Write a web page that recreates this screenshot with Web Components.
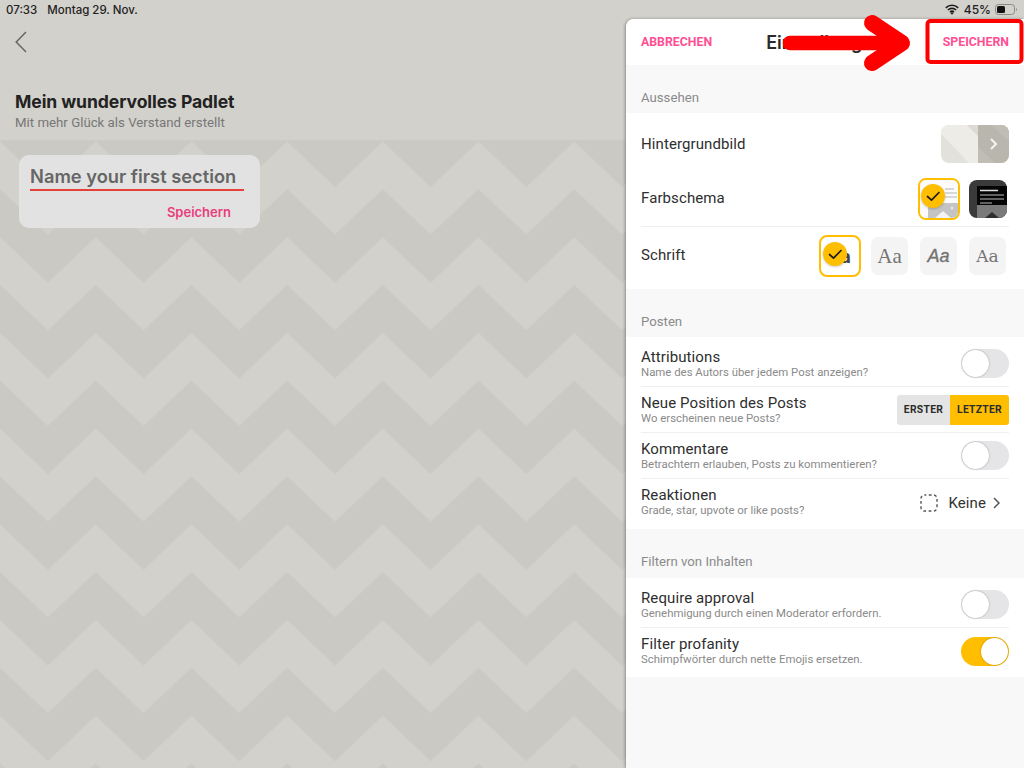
<!DOCTYPE html>
<html lang="de">
<head>
<meta charset="utf-8">
<title>Padlet Einstellungen</title>
<style>
  html, body { margin: 0; height: 100%; overflow: hidden; background: #d2d0cb; }
  body { font-family: Roboto, sans-serif; }
</style>
</head>
<body>
<padlet-app>
  <status-bar slot="status"></status-bar>
  <padlet-header slot="header" heading="Mein wundervolles Padlet" sub="Mit mehr Glück als Verstand erstellt"></padlet-header>
  <chevron-board slot="board">
    <section-card placeholder="Name your first section" action="Speichern"></section-card>
  </chevron-board>
  <settings-panel slot="panel">
    <settings-section label="Aussehen" pad-bottom="6">
      <settings-row heading="Hintergrundbild" height="54" plain>
        <wallpaper-thumb></wallpaper-thumb>
      </settings-row>
      <settings-row heading="Farbschema" height="56">
        <div style="display:flex;gap:9px;align-items:center;margin-right:2px">
          <scheme-thumb selected></scheme-thumb>
          <scheme-thumb dark></scheme-thumb>
        </div>
      </settings-row>
      <settings-row heading="Schrift" height="56" plain>
        <div style="display:flex;gap:12px;align-items:center;margin:2px 3px 0 0">
          <font-swatch selected face="'DejaVu Sans Mono',monospace" size="18" style="margin-right:-2px"></font-swatch>
          <font-swatch face="'Liberation Serif',serif" size="21"></font-swatch>
          <font-swatch face="'Liberation Sans',sans-serif" size="18" tilt></font-swatch>
          <font-swatch face="'DejaVu Serif',serif" size="17"></font-swatch>
        </div>
      </settings-row>
    </settings-section>
    <settings-section label="Posten">
      <settings-row heading="Attributions" sub="Name des Autors über jedem Post anzeigen?"><toggle-switch></toggle-switch></settings-row>
      <settings-row heading="Neue Position des Posts" sub="Wo erscheinen neue Posts?"><segment-switch first="ERSTER" second="LETZTER"></segment-switch></settings-row>
      <settings-row heading="Kommentare" sub="Betrachtern erlauben, Posts zu kommentieren?"><toggle-switch></toggle-switch></settings-row>
      <settings-row heading="Reaktionen" sub="Grade, star, upvote or like posts?" plain><reaction-picker value="Keine"></reaction-picker></settings-row>
    </settings-section>
    <settings-section label="Filtern von Inhalten" label-bottom="8" pad-bottom="3">
      <settings-row heading="Require approval" sub="Genehmigung durch einen Moderator erfordern."><toggle-switch></toggle-switch></settings-row>
      <settings-row heading="Filter profanity" sub="Schimpfwörter durch nette Emojis ersetzen." plain><toggle-switch on></toggle-switch></settings-row>
    </settings-section>
  </settings-panel>
  <red-annotation slot="overlay"></red-annotation>
</padlet-app>

<script>
const CHECK_BADGE = `
  <svg class="check" width="26" height="26" viewBox="0 0 26 26">
    <circle cx="13" cy="13" r="12" fill="#ffbf00"/>
    <path d="M7.500 13.500l4 3.600 7.500-7.600" fill="none" stroke="#1d1d1d" stroke-width="1.700" stroke-linecap="round" stroke-linejoin="round"/>
  </svg>`;

class Base extends HTMLElement {
  connectedCallback() {
    if (!this.shadowRoot) {
      this.attachShadow({ mode: 'open' });
      this.render();
    }
  }
}

class PadletApp extends Base {
  render() {
    this.shadowRoot.innerHTML = `
      <style>
        :host { display: block; position: relative; width: 1024px; height: 768px; overflow: hidden; }
        .page { display: flex; flex-direction: column; height: 100%; }
        .top { background: #d2d1cc; border-bottom: 1px solid #cdcbc6; height: 140px; flex: none; }
        .board { flex: 1; min-height: 0; display: flex; }
        .board ::slotted(*) { flex: 1; }
        .panel { position: absolute; top: 19px; right: 0; bottom: 0; width: 398px; display: flex; }
      </style>
      <div class="page">
        <div class="top">
          <slot name="status"></slot>
          <slot name="header"></slot>
        </div>
        <div class="board"><slot name="board"></slot></div>
      </div>
      <div class="panel"><slot name="panel"></slot></div>
      <slot name="overlay"></slot>
    `;
  }
}

class StatusBar extends Base {
  render() {
    this.shadowRoot.innerHTML = `
      <style>
        :host { display: flex; justify-content: space-between; align-items: center; height: 19px;
                padding: 0 7px 0 6px; box-sizing: border-box; font: 500 11.500px Inter, sans-serif; color: #222; }
        .left { display: flex; gap: 10px; }
        .right { display: flex; align-items: center; gap: 4px; }
        .pct { font-size: 12px; }
      </style>
      <div class="left"><span>07:33</span><span>Montag 29. Nov.</span></div>
      <div class="right">
        <svg width="14" height="11" viewBox="0 0 14 11" style="margin-right:1px">
          <path d="M.8 3.800a9 9 0 0 1 12.400 0M2.900 6a6 6 0 0 1 8.200 0M5 8.100a3 3 0 0 1 4 0" fill="none" stroke="#1c1c1c" stroke-width="1.600"/>
          <path d="M7 10.800L5.400 9.100a2.300 2.300 0 0 1 3.200 0z" fill="#1c1c1c"/>
        </svg>
        <span class="pct">45%</span>
        <svg width="22" height="11" viewBox="0 0 22 11">
          <rect x=".5" y=".5" width="19" height="10" rx="3" fill="none" stroke="#8a8884"/>
          <rect x="2" y="2" width="8" height="7" rx="1.500" fill="#111"/>
          <path d="M21 4v3c.7-.3 1-.9 1-1.500S21.700 4.300 21 4z" fill="#8a8884"/>
        </svg>
      </div>
    `;
  }
}

class PadletHeader extends Base {
  render() {
    this.shadowRoot.innerHTML = `
      <style>
        :host { display: flex; flex-direction: column; padding: 12px 15px 0; }
        svg { display: block; margin-bottom: 38px; }
        h1 { margin: 0; font: 700 17.600px/22px Inter, sans-serif; color: #222; letter-spacing: -.1px; }
        p { margin: 2px 0 0; font: 400 13.250px/16px Roboto, sans-serif; color: #777; }
      </style>
      <svg width="12" height="22" viewBox="0 0 12 22">
        <path d="M11 1L1.200 11 11 21" fill="none" stroke="#666" stroke-width="1.500"/>
      </svg>
      <h1>${this.getAttribute('heading')}</h1>
      <p>${this.getAttribute('sub')}</p>
    `;
  }
}

class ChevronBoard extends Base {
  render() {
    this.shadowRoot.innerHTML = `
      <style>
        :host { display: block; position: relative; background: #cbc9c3; overflow: hidden; }
        svg { position: absolute; inset: 0; width: 100%; height: 100%; }
        .content { position: relative; padding: 14px 0 0 19px; }
      </style>
      <svg aria-hidden="true">
        <defs>
          <pattern id="zig" width="95.700" height="95.700" patternUnits="userSpaceOnUse">
            <path d="M0 .5L47.850 46 95.700 .5V48L47.850 93.500 0 48z" fill="#d3d1cc"/>
          </pattern>
        </defs>
        <rect width="100%" height="100%" fill="url(#zig)"/>
      </svg>
      <div class="content"><slot></slot></div>
    `;
  }
}

class SectionCard extends Base {
  render() {
    this.shadowRoot.innerHTML = `
      <style>
        :host { display: flex; flex-direction: column; width: 241px; height: 72.500px; box-sizing: border-box;
                padding: 9px 16px 0 11px; background: #e2e2e2; border-radius: 10px; }
        .name { font: 600 18.300px/25px Inter, sans-serif; color: #666; white-space: nowrap;
                border-bottom: 2px solid #e6403a; }
        .action { align-self: flex-end; margin: 13px 13px 0 0; font: 600 13px/16px Inter, sans-serif; color: #ea3d7c; }
      </style>
      <div class="name">${this.getAttribute('placeholder')}</div>
      <div class="action">${this.getAttribute('action')}</div>
    `;
  }
}

class SettingsPanel extends Base {
  render() {
    this.shadowRoot.innerHTML = `
      <style>
        :host { display: flex; flex-direction: column; flex: 1; background: #f8f8f8; border-radius: 8px 0 0 0;
                box-shadow: -1px 0 3px rgba(60,58,54,.45); overflow: hidden; }
        header { display: grid; grid-template-columns: 1fr auto 1fr; align-items: center; height: 46px; flex: none;
                 padding: 0 15px; background: #fff; }
        .btn { font: 700 12.300px Roboto, sans-serif; color: #ff4f93; }
        .btn.save { justify-self: end; }
        h2 { margin: 0; font: 600 18px Inter, sans-serif; color: #2a2a2a; }
      </style>
      <header>
        <span class="btn">ABBRECHEN</span>
        <h2>Einstellungen</h2>
        <span class="btn save">SPEICHERN</span>
      </header>
      <slot></slot>
    `;
  }
}

class SettingsSection extends Base {
  render() {
    const pb = this.getAttribute('pad-bottom') || 4;
    const lb = this.getAttribute('label-bottom') || 7;
    this.shadowRoot.innerHTML = `
      <style>
        :host { display: block; }
        .label { padding: 25px 15px ${lb}px; font: 400 13.200px/16px Roboto, sans-serif; color: #8a8a8a; }
        .group { background: #fff; padding: 4px 15px ${pb}px; }
      </style>
      <div class="label">${this.getAttribute('label')}</div>
      <div class="group"><slot></slot></div>
    `;
  }
}

class SettingsRow extends Base {
  render() {
    const h = this.getAttribute('height') || 46;
    const sub = this.getAttribute('sub');
    this.shadowRoot.innerHTML = `
      <style>
        :host { display: flex; align-items: center; justify-content: space-between; height: ${h}px; box-sizing: border-box;
                border-bottom: ${this.hasAttribute('plain') ? '0' : '1px solid #efefef'}; }
        .text { margin-top: -1px; }
        .title { font: 400 15px/18px Roboto, sans-serif; color: #2e2e2e; letter-spacing: .1px; }
        .sub { font: 400 11.400px/13px Roboto, sans-serif; color: #8a8a8a; }
      </style>
      <div class="text">
        <div class="title">${this.getAttribute('heading')}</div>
        ${sub ? `<div class="sub">${sub}</div>` : ''}
      </div>
      <slot></slot>
    `;
  }
}

class ToggleSwitch extends Base {
  render() {
    const on = this.hasAttribute('on');
    this.shadowRoot.innerHTML = `
      <style>
        :host { display: flex; justify-content: ${on ? 'flex-end' : 'flex-start'}; width: 48px; height: 29px; box-sizing: border-box;
                border-radius: 15px; background: ${on ? '#ffbf00' : '#e5e5e7'}; padding: 1px; }
        i { width: 27px; height: 27px; border-radius: 50%; background: #fff; box-shadow: 0 0 2px rgba(0,0,0,.35); }
      </style>
      <i></i>
    `;
  }
}

class SegmentSwitch extends Base {
  render() {
    this.shadowRoot.innerHTML = `
      <style>
        :host { display: flex; width: 112px; height: 30px; border-radius: 3px; overflow: hidden;
                font: 700 10.300px/30px Roboto, sans-serif; letter-spacing: .3px; color: #2b2b2b; text-align: center; }
        .a { width: 53px; background: #e4e4e4; }
        .b { flex: 1; background: #ffbf00; }
      </style>
      <div class="a">${this.getAttribute('first')}</div>
      <div class="b">${this.getAttribute('second')}</div>
    `;
  }
}

class ReactionPicker extends Base {
  render() {
    this.shadowRoot.innerHTML = `
      <style>
        :host { display: flex; align-items: center; font: 400 15px Roboto, sans-serif; color: #333; margin-right: 9px; margin-top: 1px; }
        span { margin: 0 7px 0 10px; letter-spacing: .1px; }
      </style>
      <svg width="18" height="18" viewBox="0 0 18 18">
        <rect x="1" y="1" width="16" height="16" rx="3.500" fill="none" stroke="#555" stroke-width="1.400" stroke-dasharray="2.800 2.500" stroke-dashoffset="1"/>
      </svg>
      <span>${this.getAttribute('value')}</span>
      <svg width="7" height="12" viewBox="0 0 7 12">
        <path d="M1 1l5 5-5 5" fill="none" stroke="#555" stroke-width="1.500"/>
      </svg>
    `;
  }
}

class WallpaperThumb extends Base {
  render() {
    this.shadowRoot.innerHTML = `
      <style>
        :host { display: block; width: 68px; height: 38px; border-radius: 8px; overflow: hidden; }
        svg { display: block; }
      </style>
      <svg width="68" height="38" viewBox="0 0 68 38">
        <rect width="68" height="38" fill="#e3e1db"/>
        <path d="M0 0H26L37 11V38H28L0 9z" fill="#eeece7"/>
        <path d="M26 0H37V11z" fill="#dcdad3"/>
        <rect x="37" width="31" height="38" fill="#b9b6ae"/>
        <path d="M37 22L54 38H37zM50 0H68V16z" fill="#c0bdb6"/>
        <path d="M50 14l5 5-5 5" fill="none" stroke="#f4f4f2" stroke-width="2"/>
      </svg>
    `;
  }
}

class SchemeThumb extends Base {
  render() {
    const dark = this.hasAttribute('dark');
    const selected = this.hasAttribute('selected');
    this.shadowRoot.innerHTML = `
      <style>
        :host { display: block; position: relative; box-sizing: border-box;
                ${selected ? 'width:42px;height:42px;border:2px solid #ffbf00;border-radius:8px;' : 'width:38px;height:38px;'} }
        svg.art { display: block; border-radius: ${selected ? '6px' : '8px'}; }
        .check { position: absolute; left: 0; top: 3px; filter: drop-shadow(0 1px 1px rgba(0,0,0,.2)); }
      </style>
      ${dark ? `
      <svg class="art" width="38" height="38" viewBox="0 0 38 38">
        <rect width="38" height="38" fill="#3a3a3a"/>
        <rect x="8" y="6" width="30" height="19" fill="#050505"/>
        <rect x="8" y="25" width="30" height="13" fill="#7a7a7a"/>
        <path d="M11 15h24M11 19h24M11 23h12" stroke="#bdbdbd" stroke-width="1"/>
        <path d="M11 10.500h18" stroke="#e0e0e0" stroke-width="1.500"/>
        <path d="M16 38l7-6 7 6z" fill="#2e2e2e"/>
      </svg>` : `
      <svg class="art" width="38" height="38" viewBox="0 0 38 38">
        <rect width="38" height="38" fill="#fbfbfb"/>
        <rect x="8" y="23" width="30" height="15" fill="#c4c4c4"/>
        <path d="M25 9h9M25 13h12M25 17h12" stroke="#b5b5b5" stroke-width="1"/>
        <path d="M15 38l8-7 8 7z" fill="#f3f3f3"/>
        <circle cx="32" cy="28" r="1.500" fill="#e6e6e6"/>
      </svg>`}
      ${selected ? CHECK_BADGE : ''}
    `;
  }
}

class FontSwatch extends Base {
  render() {
    const selected = this.hasAttribute('selected');
    const face = this.getAttribute('face');
    const size = this.getAttribute('size') || 19;
    this.shadowRoot.innerHTML = `
      <style>
        :host { display: flex; align-items: center; justify-content: center; position: relative; box-sizing: border-box;
                font-family: ${face}; font-size: ${size}px;
                ${selected
                  ? 'width:42px;height:42px;border:2px solid #ffbf00;border-radius:8px;background:#fff;color:#444;font-weight:700;'
                  : 'width:37px;height:38px;border-radius:7px;background:#f4f4f4;color:#737373;'} }
        span { ${this.hasAttribute('tilt') ? 'font-style: italic; -webkit-text-stroke: .35px #737373;' : ''} }
        .check { position: absolute; left: 1px; top: 4px; filter: drop-shadow(0 1px 1px rgba(0,0,0,.2)); }
      </style>
      <span>Aa</span>
      ${selected ? CHECK_BADGE : ''}
    `;
  }
}

// Rote Markierung liegt über dem Screenshot, daher absolut
class RedAnnotation extends Base {
  render() {
    this.shadowRoot.innerHTML = `
      <style>
        :host { display: block; position: absolute; inset: 0; pointer-events: none; }
        svg { position: absolute; left: 0; top: 0; }
      </style>
      <svg width="1024" height="768" viewBox="0 0 1024 768" aria-hidden="true">
        <path d="M790 43H902" fill="none" stroke="#f00" stroke-width="14.500" stroke-linecap="round"/>
        <path d="M872 23L902 43 872 63" fill="none" stroke="#f00" stroke-width="16" stroke-linecap="round" stroke-linejoin="round"/>
        <rect x="927.500" y="21" width="94" height="41" rx="3" fill="none" stroke="#f00" stroke-width="4"/>
      </svg>
    `;
  }
}

customElements.define('padlet-app', PadletApp);
customElements.define('status-bar', StatusBar);
customElements.define('padlet-header', PadletHeader);
customElements.define('chevron-board', ChevronBoard);
customElements.define('section-card', SectionCard);
customElements.define('settings-panel', SettingsPanel);
customElements.define('settings-section', SettingsSection);
customElements.define('settings-row', SettingsRow);
customElements.define('toggle-switch', ToggleSwitch);
customElements.define('segment-switch', SegmentSwitch);
customElements.define('reaction-picker', ReactionPicker);
customElements.define('wallpaper-thumb', WallpaperThumb);
customElements.define('scheme-thumb', SchemeThumb);
customElements.define('font-swatch', FontSwatch);
customElements.define('red-annotation', RedAnnotation);
</script>
</body>
</html>
